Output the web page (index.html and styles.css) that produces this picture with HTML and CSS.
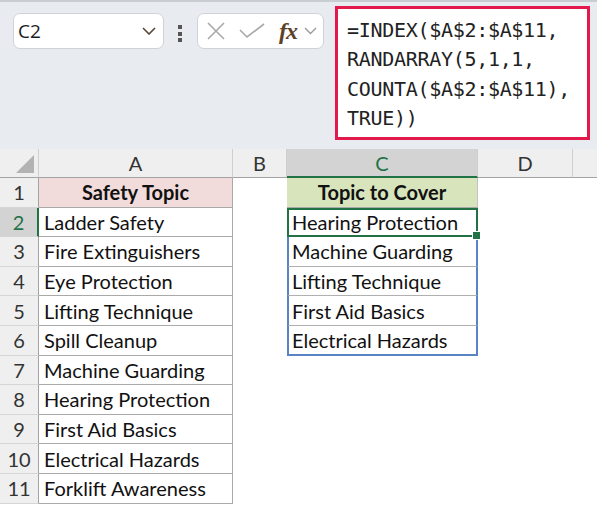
FILE: index.html
```html
<!DOCTYPE html>
<html lang="en">
<head>
  <meta charset="UTF-8">
  <meta name="viewport" content="width=device-width, initial-scale=1.0">
  <title>Safety Topics</title>
  <link rel="stylesheet" href="styles.css">
</head>

<body>
  <div class="toolbar">
    <div class="namebox">
      <span>C2</span>
      <svg class="chev" width="14" height="8" viewBox="0 0 14 8"><path d="M1 1 L7 7 L13 1" fill="none" stroke="#5a4634" stroke-width="1.6"/></svg>
    </div>
    <div class="dots"><i></i><i></i><i></i></div>
    <div class="fxbox">
      <svg width="20" height="18" viewBox="0 0 20 18"><path d="M2 1 L18 17 M18 1 L2 17" stroke="#a8a8a8" stroke-width="1.6" fill="none"/></svg>
      <svg width="26" height="16" viewBox="0 0 26 16"><path d="M1 7 L8 14 L25 1" stroke="#a8a8a8" stroke-width="1.6" fill="none"/></svg>
      <span class="fx">fx</span>
      <svg class="chev" width="13" height="8" viewBox="0 0 13 8"><path d="M1 1 L6.5 6.5 L12 1" fill="none" stroke="#9a9a9a" stroke-width="1.4"/></svg>
    </div>
    <div class="formula">=INDEX($A$2:$A$11,<br>RANDARRAY(5,1,1,<br>COUNTA($A$2:$A$11),<br>TRUE))</div>
  </div>

  <div class="sheet">
    <div class="corner"><span class="tri"></span></div>
    <div class="colhead">A</div>
    <div class="colhead">B</div>
    <div class="colhead sel">C</div>
    <div class="colhead">D</div>
    <div class="colhead last"></div>

    <div class="rowhead">1</div>
    <div class="cell a head-a">Safety Topic</div>
    <div class="cell"></div>
    <div class="cell c head-c">Topic to Cover</div>
    <div class="cell"></div>
    <div class="cell"></div>

    <div class="rowhead sel">2</div>
    <div class="cell a">Ladder Safety</div>
    <div class="cell"></div>
    <div class="cell c active">Hearing Protection<span class="handle"></span></div>
    <div class="cell"></div>
    <div class="cell"></div>

    <div class="rowhead">3</div>
    <div class="cell a">Fire Extinguishers</div>
    <div class="cell"></div>
    <div class="cell c spill">Machine Guarding</div>
    <div class="cell"></div>
    <div class="cell"></div>

    <div class="rowhead">4</div>
    <div class="cell a">Eye Protection</div>
    <div class="cell"></div>
    <div class="cell c spill">Lifting Technique</div>
    <div class="cell"></div>
    <div class="cell"></div>

    <div class="rowhead">5</div>
    <div class="cell a">Lifting Technique</div>
    <div class="cell"></div>
    <div class="cell c spill">First Aid Basics</div>
    <div class="cell"></div>
    <div class="cell"></div>

    <div class="rowhead">6</div>
    <div class="cell a">Spill Cleanup</div>
    <div class="cell"></div>
    <div class="cell c spill end">Electrical Hazards</div>
    <div class="cell"></div>
    <div class="cell"></div>

    <div class="rowhead">7</div>
    <div class="cell a">Machine Guarding</div>
    <div class="cell"></div>
    <div class="cell"></div>
    <div class="cell"></div>
    <div class="cell"></div>

    <div class="rowhead">8</div>
    <div class="cell a">Hearing Protection</div>
    <div class="cell"></div>
    <div class="cell"></div>
    <div class="cell"></div>
    <div class="cell"></div>

    <div class="rowhead">9</div>
    <div class="cell a">First Aid Basics</div>
    <div class="cell"></div>
    <div class="cell"></div>
    <div class="cell"></div>
    <div class="cell"></div>

    <div class="rowhead">10</div>
    <div class="cell a">Electrical Hazards</div>
    <div class="cell"></div>
    <div class="cell"></div>
    <div class="cell"></div>
    <div class="cell"></div>

    <div class="rowhead">11</div>
    <div class="cell a">Forklift Awareness</div>
    <div class="cell"></div>
    <div class="cell"></div>
    <div class="cell"></div>
    <div class="cell"></div>
  </div>
</body>

</html>
```

FILE: styles.css
```css
body {
  margin: 0;
  background: #fff;
  font-family: Lato, "Liberation Sans", sans-serif;
  overflow: hidden;
}

.toolbar {
  display: flex;
  align-items: flex-start;
  height: 143px;
  background-color: #e8ecf0;
  border-top: 2px solid #c9cdd2;
  padding: 4px 0 0 13px;
  box-sizing: content-box;
}

.namebox {
  margin-top: 7px;
  width: 151px;
  height: 36px;
  box-sizing: border-box;
  background: #fff;
  border: 1px solid #cfd2d6;
  border-radius: 7px;
  display: flex;
  align-items: center;
  justify-content: space-between;
  padding: 0 7px 0 4px;
  font-family: "Open Sans", "Liberation Sans", sans-serif;
  font-size: 19px;
  color: #1c1c1c;
}

.dots {
  margin: 19px 0 0 14px;
  width: 5px;
  display: flex;
  flex-direction: column;
  gap: 2.5px;
}

.dots i {
  width: 4px;
  height: 4px;
  background: #555;
}

.fxbox {
  margin: 7px 0 0 14px;
  width: 127px;
  height: 36px;
  box-sizing: border-box;
  background: #fff;
  border: 1px solid #cfd2d6;
  border-radius: 7px;
  display: flex;
  align-items: center;
  padding: 0 0 0 8px;
}

.fxbox svg:nth-child(2) {
  margin-left: 13px;
}

.fx {
  margin-left: 14px;
  font-family: "Liberation Serif", serif;
  font-style: italic;
  font-weight: bold;
  font-size: 24px;
  color: #5c4327;
  line-height: 1;
  letter-spacing: -1px;
}

.fxbox .chev {
  margin-left: 7px;
}

.formula {
  margin-left: 11px;
  width: 255px;
  height: 134px;
  box-sizing: border-box;
  background: #fff;
  border: 3px solid #e3194b;
  padding: 7px 0 0 9px;
  font-family: "DejaVu Sans Mono", monospace;
  font-size: 20px;
  line-height: 29.3px;
  color: #222;
  letter-spacing: -0.3px;
}

.sheet {
  display: grid;
  grid-template-columns: 39px 194px 54px 191px 95px 1fr;
  grid-template-rows: 29px repeat(11, 29.6px);
  font-size: 20px;
  color: #111;
}

.corner,
.colhead,
.rowhead {
  background: #efefef;
  color: #333;
  box-sizing: border-box;
}

.corner {
  position: relative;
  border-bottom: 1px solid #a3a3a3;
  border-right: 1px solid #cfcfcf;
}

.tri {
  position: absolute;
  right: 4px;
  bottom: 4px;
  width: 0;
  height: 0;
  border-left: 18px solid transparent;
  border-bottom: 18px solid #b3b3b3;
}

.colhead {
  display: flex;
  align-items: center;
  justify-content: center;
  border-right: 1px solid #cfcfcf;
  border-bottom: 1px solid #a3a3a3;
}

.colhead.sel {
  background: #d3d3d3;
  color: #217346;
  border-bottom: 2px solid #217346;
}

.colhead.last {
  border-right: none;
}

.rowhead {
  display: flex;
  align-items: center;
  justify-content: center;
  border-right: 1px solid #a3a3a3;
  border-bottom: 1px solid #d6d6d6;
}

.rowhead.sel {
  background: #d3d3d3;
  color: #217346;
  border-right: 2px solid #217346;
}

.cell {
  box-sizing: border-box;
  display: flex;
  align-items: center;
  padding-left: 5px;
  white-space: nowrap;
}

.cell.a {
  border-right: 1px solid #a9a9a9;
  border-bottom: 1px solid #a9a9a9;
}

.head-a {
  background: #f2dcdb;
  font-weight: bold;
  justify-content: center;
  padding-left: 0;
}

.head-c {
  background: #d8e4bc;
  font-weight: bold;
  justify-content: center;
  padding-left: 0;
  border-bottom: 1px solid #a9a9a9;
  border-right: 1px solid #c3c3c3;
}

.active {
  position: relative;
  border: 2px solid #217346;
  padding-left: 3px;
}

.handle {
  position: absolute;
  right: -5px;
  bottom: -5px;
  width: 7px;
  height: 7px;
  background: #217346;
  border: 1px solid #fff;
}

.spill {
  border-left: 2px solid #5a83c6;
  border-right: 2px solid #5a83c6;
  border-bottom: 1px solid #b0b0b0;
  padding-left: 3px;
}

.spill.end {
  border-bottom: 2px solid #5a83c6;
}
```
